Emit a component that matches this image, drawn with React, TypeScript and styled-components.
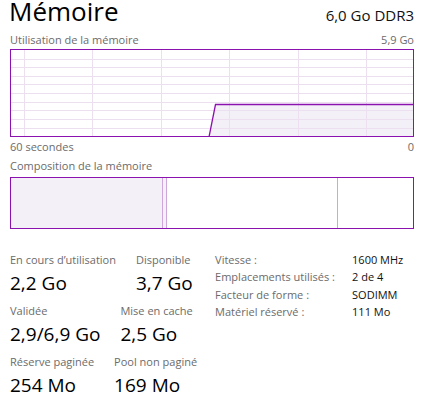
import React from 'react'
import styled, { createGlobalStyle } from 'styled-components'

const GlobalStyle = createGlobalStyle`
  html, body {
    margin: 0;
    padding: 0;
    background: #ffffff;
  }
  body {
    font-family: "Open Sans", "Noto Sans", sans-serif;
    color: #000000;
  }
`

const PURPLE = '#8b12ae'
const GRID = '#ecdff0'
const FILL = '#f3f0f7'

// composition de la mémoire, en Mo
const composition = [
  { key: 'used', mo: 2240, filled: true },
  { key: 'modified', mo: 45, filled: true },
  { key: 'standby', mo: 2540, filled: false },
  { key: 'free', mo: 1110, filled: false },
]

const stats = [
  [
    { label: 'En cours d\u2019utilisation', value: '2,2 Go' },
    { label: 'Disponible', value: '3,7 Go' },
  ],
  [
    { label: 'Validée', value: '2,9/6,9 Go' },
    { label: 'Mise en cache', value: '2,5 Go' },
  ],
  [
    { label: 'Réserve paginée', value: '254 Mo' },
    { label: 'Pool non paginé', value: '169 Mo' },
  ],
]

const infos = [
  { label: 'Vitesse :', value: '1600 MHz' },
  { label: 'Emplacements utilisés :', value: '2 de 4' },
  { label: 'Facteur de forme :', value: 'SODIMM' },
  { label: 'Matériel réservé :', value: '111 Mo' },
]

const UsageGraph: React.FC = () => {
  const w = 402
  const h = 86
  const cols = [0, 1, 2, 3, 4, 5].map(i => 13 + i * 68.4)
  const rows = [1, 2, 3, 4, 5, 6, 7, 8, 9].map(i => i * 8.62)
  const top = 54
  return (
    <svg width="100%" height="100%" viewBox={`0 0 ${w} ${h}`} preserveAspectRatio="none">
      <polygon points={`198,${h} 204.5,${top} ${w},${top} ${w},${h}`} fill={FILL} />
      {cols.map(x => (
        <line key={'c' + x} x1={Math.round(x) + 0.5} x2={Math.round(x) + 0.5} y1={0} y2={h} stroke={GRID} strokeWidth={1} />
      ))}
      {rows.map(y => (
        <line key={'r' + y} x1={0} x2={w} y1={Math.round(y) + 0.5} y2={Math.round(y) + 0.5} stroke={GRID} strokeWidth={1} />
      ))}
      <polyline points={`198,${h + 1} 204.5,${top + 0.5} ${w + 1},${top + 0.5}`} fill="none" stroke={PURPLE} strokeWidth={1.3} />
    </svg>
  )
}

const App: React.FC = () => {
  const total = composition.reduce((s, c) => s + c.mo, 0)
  return (
    <Page>
      <GlobalStyle />
      <Header>
        <Title>Mémoire</Title>
        <Subtitle>6,0 Go DDR3</Subtitle>
      </Header>

      <CaptionRow top={10}>
        <span>Utilisation de la mémoire</span>
        <span>5,9 Go</span>
      </CaptionRow>
      <UsageBox>
        <UsageGraph />
      </UsageBox>
      <CaptionRow top={2}>
        <span>60 secondes</span>
        <span>0</span>
      </CaptionRow>

      <CaptionRow top={3}>
        <span>Composition de la mémoire</span>
      </CaptionRow>
      <CompositionBox>
        {composition.map((c, i) => (
          <Segment
            key={c.key}
            filled={c.filled}
            last={i === composition.length - 1}
            style={{ flexGrow: c.mo / total }}
          />
        ))}
      </CompositionBox>

      <Details>
        <StatsBlock>
          {stats.map((row, i) => (
            <StatRow key={i}>
              {row.map(s => (
                <Stat key={s.label}>
                  <StatLabel>{s.label}</StatLabel>
                  <StatValue>{s.value}</StatValue>
                </Stat>
              ))}
            </StatRow>
          ))}
        </StatsBlock>
        <InfoGrid>
          {infos.map(info => (
            <React.Fragment key={info.label}>
              <InfoLabel>{info.label}</InfoLabel>
              <InfoValue>{info.value}</InfoValue>
            </React.Fragment>
          ))}
        </InfoGrid>
      </Details>
    </Page>
  )
}

const Page = styled.div`
  width: 404px;
  height: 402px;
  padding-left: 10px;
  overflow: hidden;
`

const Header = styled.div`
  display: flex;
  justify-content: space-between;
  align-items: baseline;
  height: 22px;
  line-height: 22px;
`

const Title = styled.div`
  font-size: 26px;
  font-weight: 400;
  color: #000000;
  margin-left: -1px;
`

const Subtitle = styled.div`
  font-size: 15px;
  color: #111111;
`

interface CaptionRowProps {
  top: number
}
const CaptionRow = styled.div<CaptionRowProps>`
  display: flex;
  justify-content: space-between;
  margin-top: ${props => props.top}px;
  height: 16px;
  line-height: 16px;
  font-size: 11px;
  color: #6b6b6b;
`

const UsageBox = styled.div`
  margin-top: 1px;
  height: 86px;
  border: 1px solid ${PURPLE};
  background: #ffffff;
  svg {
    display: block;
  }
`

const CompositionBox = styled.div`
  display: flex;
  margin-top: 3px;
  height: 50px;
  border: 1px solid ${PURPLE};
`

interface SegmentProps {
  filled: boolean
  last: boolean
}
const Segment = styled.div<SegmentProps>`
  flex-basis: 0;
  flex-shrink: 1;
  background: ${props => (props.filled ? FILL : '#ffffff')};
  border-right: ${props => (props.last ? 'none' : '1px solid #cfa6dc')};
`

const Details = styled.div`
  display: flex;
  align-items: flex-start;
  gap: 18px;
  margin-top: 23px;
`

const StatsBlock = styled.div`
  display: flex;
  flex-direction: column;
  gap: 7px;
`

const StatRow = styled.div`
  display: flex;
  gap: 20px;
`

const Stat = styled.div`
  display: flex;
  flex-direction: column;
  gap: 2px;
`

const StatLabel = styled.div`
  font-size: 11px;
  line-height: 16px;
  color: #6b6b6b;
  white-space: nowrap;
`

const StatValue = styled.div`
  font-size: 19px;
  line-height: 26px;
  color: #000000;
  white-space: nowrap;
`

const InfoGrid = styled.div`
  display: grid;
  grid-template-columns: 137px auto;
  margin-top: -1px;
  font-size: 11px;
  line-height: 17.4px;
`

const InfoLabel = styled.div`
  color: #6b6b6b;
  white-space: nowrap;
`

const InfoValue = styled.div`
  color: #111111;
  white-space: nowrap;
`

export default App
